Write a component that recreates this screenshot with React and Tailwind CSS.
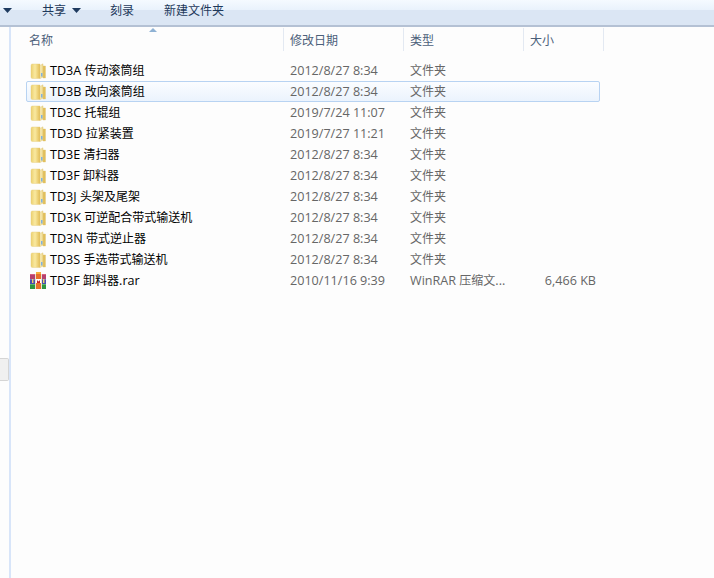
const FONT = "font-['Open_Sans','Noto_Sans_CJK_SC',sans-serif]";

const rows = [
  ["TD3A", "传动滚筒组", "2012/8/27 8:34", "文件夹", ""],
  ["TD3B", "改向滚筒组", "2012/8/27 8:34", "文件夹", ""],
  ["TD3C", "托辊组", "2019/7/24 11:07", "文件夹", ""],
  ["TD3D", "拉紧装置", "2019/7/27 11:21", "文件夹", ""],
  ["TD3E", "清扫器", "2012/8/27 8:34", "文件夹", ""],
  ["TD3F", "卸料器", "2012/8/27 8:34", "文件夹", ""],
  ["TD3J", "头架及尾架", "2012/8/27 8:34", "文件夹", ""],
  ["TD3K", "可逆配合带式输送机", "2012/8/27 8:34", "文件夹", ""],
  ["TD3N", "带式逆止器", "2012/8/27 8:34", "文件夹", ""],
  ["TD3S", "手选带式输送机", "2012/8/27 8:34", "文件夹", ""],
  ["TD3F", "卸料器", "2010/11/16 9:39", "WinRAR 压缩文...", "6,466 KB", ".rar"],
];

function Folder() {
  return (
    <svg width="16" height="16" viewBox="0 0 16 16" className="shrink-0">
      <defs>
        <linearGradient id="fb" x1="0" y1="0" x2="1" y2="0">
          <stop offset="0" stopColor="#ecd070" />
          <stop offset="0.45" stopColor="#f9e9a0" />
          <stop offset="1" stopColor="#e3bd55" />
        </linearGradient>
        <linearGradient id="ff" x1="0" y1="0" x2="1" y2="0">
          <stop offset="0" stopColor="#fbf0c0" />
          <stop offset="1" stopColor="#ecd586" />
        </linearGradient>
      </defs>
      <path d="M1 2.5 L1 14 Q1 15.5 2.5 15.5 L10 15.5 L10 1 L2 1 Q1 1 1 2.5 Z" fill="url(#fb)" stroke="#e6cc7c" strokeWidth="0.4" />
      <path d="M13 3 L15.5 3 L15.5 15 L13 15 Z" fill="#e2bf5a" stroke="#e0c470" strokeWidth="0.4" />
      <path d="M10 2.5 L13 0.8 L13 14 L10 15.5 Z" fill="url(#ff)" stroke="#dcc272" strokeWidth="0.4" />
      <rect x="11" y="10" width="1.5" height="3.5" fill="#7fb2e0" />
    </svg>
  );
}

function Rar() {
  return (
    <svg width="16" height="17" viewBox="0 0 16 17" className="shrink-0">
      <rect x="0" y="2" width="16" height="5" fill="#b5406e" />
      <rect x="0" y="7" width="16" height="5" fill="#4a4db0" />
      <rect x="0" y="12" width="16" height="5" fill="#2f9440" />
      <rect x="0" y="2" width="16" height="1" fill="#d8607e" />
      <rect x="0" y="7" width="16" height="1" fill="#7478cc" />
      <rect x="0" y="12" width="16" height="1" fill="#5cb868" />
      <rect x="5" y="2" width="1" height="15" fill="#e8e2d0" />
      <rect x="11" y="2" width="1" height="15" fill="#e8e2d0" />
      <rect x="6" y="0" width="5" height="17" fill="#e8702a" />
      <rect x="6" y="0" width="5" height="2" fill="#f4b03c" />
      <rect x="6" y="7" width="5" height="4" fill="#fff" />
      <path d="M7 11 L7 8 L8.5 9.5 L10 8 L10 11 Z" fill="#c8202a" />
      <rect x="2" y="7" width="1.4" height="4" fill="#f0d060" />
      <rect x="13" y="7" width="1.4" height="4" fill="#f0d060" />
    </svg>
  );
}

function Caret({ className }) {
  return (
    <svg width="9" height="5" viewBox="0 0 9 5" className={className}>
      <path d="M0 0 H9 L4.5 5 Z" fill="#1e3a5f" />
    </svg>
  );
}

function HeaderCell({ w, pl, children }) {
  return (
    <div className={`${w} ${pl} h-[23px] flex items-center shrink-0 border-r border-[#e3e9f2]`}>
      {children}
    </div>
  );
}

function Row({ r, selected }) {
  const isRar = r[5] === ".rar";
  return (
    <div
      className={`flex items-center h-[21px] w-[574px] rounded-[2px] border ${
        selected
          ? "border-[#b8d3f2] bg-gradient-to-b from-[#fbfdff] to-[#ebf3fd]"
          : "border-transparent"
      }`}
    >
      <div className="w-[263px] shrink-0 pl-[3px] flex items-center gap-[4px] text-black whitespace-nowrap">
        {isRar ? <Rar /> : <Folder />}
        <span>
          <span className="text-[12.6px]">{r[0]} </span>
          {r[1]}
          {isRar && <span className="text-[12.6px]">{r[5]}</span>}
        </span>
      </div>
      <div className="w-[120px] shrink-0 text-[12.6px] text-[#666] whitespace-nowrap">{r[2]}</div>
      <div className="w-[110px] shrink-0 text-[#666] whitespace-nowrap">
        {isRar ? <><span className="text-[12.6px]">WinRAR </span>压缩文<span className="text-[12.6px]">...</span></> : r[3]}
      </div>
      <div className="w-[76px] shrink-0 text-right text-[12.6px] text-[#666] whitespace-nowrap">{r[4]}</div>
    </div>
  );
}

export default function App() {
  return (
    <div className={`w-[714px] h-[578px] overflow-hidden flex flex-col bg-[#fdfdfd] text-[12px] leading-[16px] ${FONT}`}>
      <div className="h-[27px] shrink-0 flex flex-col border-b-2 border-[#b4c1d4]">
        <div className="h-[10px] bg-gradient-to-b from-[#f5faff] to-[#e9f2fc]" />
        <div className="flex-1 bg-[#dbe6f4]" />
        <div className="-mt-[25px] h-[25px] flex items-center text-[#1e395b] pb-[4px]">
          <Caret className="ml-[3px]" />
          <span className="ml-[30px]">共享</span>
          <Caret className="ml-[6px]" />
          <span className="ml-[29px]">刻录</span>
          <span className="ml-[30px]">新建文件夹</span>
        </div>
      </div>
      <div className="flex-1 flex min-h-0">
        <div className="w-[11px] shrink-0 border-r-2 border-[#d8e5f9] flex flex-col">
          <div className="mt-[331px] h-[23px] w-[9px] bg-[#f0f0f0] border border-l-0 border-[#d5d5d5] rounded-r-[2px]" />
        </div>
        <div className="flex-1 min-w-0 flex flex-col pl-[1px]">
          <div className="relative flex text-[#4c607a] pt-[1px]">
            <svg width="8" height="4" viewBox="0 0 8 4" className="absolute left-[137px] top-[1px]">
              <path d="M0 4 L4 0 L8 4 Z" fill="#8fb2d4" />
            </svg>
            <HeaderCell w="w-[272px]" pl="pl-[17px] pt-[2px]">名称</HeaderCell>
            <HeaderCell w="w-[120px]" pl="pl-[6px] pt-[2px]">修改日期</HeaderCell>
            <HeaderCell w="w-[120px]" pl="pl-[6px] pt-[2px]">类型</HeaderCell>
            <HeaderCell w="w-[80px]" pl="pl-[6px] pt-[2px]">大小</HeaderCell>
          </div>
          <div className="flex flex-col pl-[14px] pt-[9px]">
            {rows.map((r, i) => (
              <Row key={i} r={r} selected={i === 1} />
            ))}
          </div>
        </div>
      </div>
    </div>
  );
}
